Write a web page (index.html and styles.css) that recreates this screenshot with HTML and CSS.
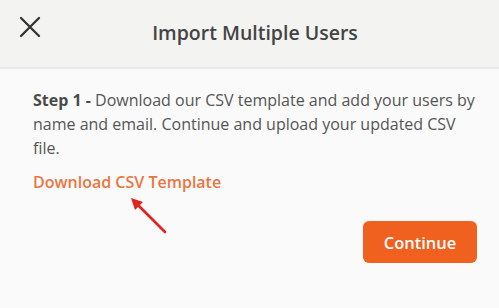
FILE: index.html
```html
<!DOCTYPE html>
<html>
<head>
<meta charset="utf-8">
<link rel="stylesheet" href="styles.css">
</head>
<body>
<div class="modal">
  <header class="header">
    <svg class="close" width="22" height="22" viewBox="0 0 22 22"><path d="M2 2 L20 20 M20 2 L2 20" stroke="#333" stroke-width="2.3" stroke-linecap="round"/></svg>
    <h1 class="title">Import Multiple Users</h1>
  </header>
  <main class="content">
    <p class="desc"><strong>Step 1 -</strong> Download our CSV template and add your users by name and email. Continue and upload your updated CSV file.</p>
    <a class="link" href="#">Download CSV Template</a>
    <div class="actions">
      <button class="btn">Continue</button>
    </div>
    <svg class="arrow" width="44" height="44" viewBox="0 0 44 44"><line x1="39" y1="39" x2="10" y2="10" stroke="#e3231e" stroke-width="2.6" stroke-linecap="round"/><polygon points="5,5 17,9 9,17" fill="#e3231e"/></svg>
  </main>
</div>
</body>
</html>
```
FILE: styles.css
```css
* { box-sizing: border-box; }
html, body { margin: 0; padding: 0; }
body {
  width: 499px;
  height: 308px;
  background: #fafafa;
  font-family: "Open Sans", "Noto Sans", sans-serif;
  overflow: hidden;
}
.modal { height: 308px; display: flex; flex-direction: column; }
.header {
  height: 69px;
  background: #f3f3f2;
  border-bottom: 2px solid #e9e9e8;
  display: flex;
  align-items: center;
  position: relative;
}
.close { position: absolute; left: 19px; top: 16px; }
.title {
  margin: 0;
  width: 100%;
  text-align: center;
  font-size: 19.5px;
  font-weight: 600;
  color: #444;
  padding-left: 11px;
  padding-bottom: 2px;
}
.content {
  position: relative;
  padding: 19px 20px 0 33px;
  flex: 1;
}
.desc {
  margin: 0;
  font-size: 16px;
  line-height: 24px;
  color: #555;
}
.desc strong { font-weight: 700; color: #4a4a4a; }
.link {
  display: inline-block;
  margin-top: 10px;
  font-size: 16px;
  line-height: 24px;
  font-weight: 600;
  color: #ea763f;
  text-decoration: none;
}
.actions { display: flex; justify-content: flex-end; margin-top: 27px; padding-right: 4px; }
.btn {
  width: 114px;
  height: 42px;
  border: none;
  border-radius: 6px;
  background: #f0601f;
  color: #fff;
  font-family: inherit;
  font-size: 16.5px;
  font-weight: 600;
}
.arrow { position: absolute; left: 126px; top: 124px; }
.actions { padding-right: 4px; margin-right: -2px; }
```
